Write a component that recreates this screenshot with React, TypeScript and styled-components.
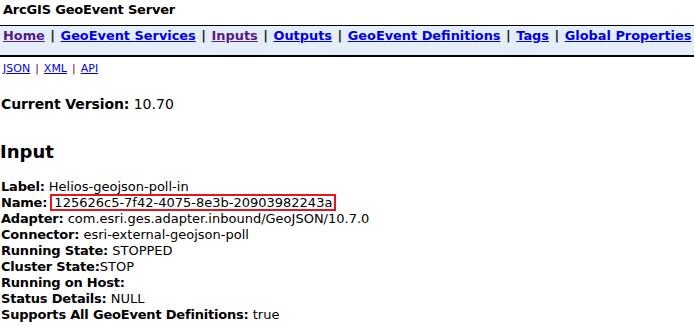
import * as React from 'react'
import styled, { createGlobalStyle } from 'styled-components'

const GlobalStyle = createGlobalStyle`
	body {
		margin: 0;
		background: #ffffff;
		color: #000000;
		font-family: Verdana, 'DejaVu Sans', sans-serif;
	}
`

const Page = styled.div`
	display: flex;
	flex-direction: column;
`

const Title = styled.div`
	height: 25px;
	padding: 2px 0 0 3px;
	box-sizing: border-box;
	font-size: 13px;
	font-weight: bold;
	line-height: 16px;
	letter-spacing: -0.2px;
`

const NavBar = styled.div`
	height: 32px;
	box-sizing: border-box;
	border-top: 1px solid #000;
	border-bottom: 2px solid #000;
	background: #e4eef8;
	padding: 2px 0 0 3px;
	font-size: 12.9px;
	font-weight: bold;
	line-height: 16px;
	white-space: nowrap;
`

const NavLink = styled.a<{ $visited?: boolean }>`
	color: ${(p) => (p.$visited ? '#551a8b' : '#0000ee')};
	text-decoration: underline;
`

const NavSep = styled.span`
	color: #1a1a1a;
	padding: 0 5.5px;
`

const Formats = styled.div`
	padding: 5px 0 0 3px;
	font-size: 11px;
	line-height: 13px;
`

const FormatLink = styled.a`
	color: #0000ee;
	text-decoration: underline;
`

const FormatSep = styled.span`
	color: #800040;
	padding: 0 5px;
`

const Version = styled.div`
	padding: 21px 0 0 1px;
	font-size: 14px;
	line-height: 17px;
`

const Heading = styled.h2`
	margin: 0;
	padding: 29px 0 0 0;
	font-size: 18px;
	line-height: 20px;
	font-weight: bold;
`

const Details = styled.div`
	padding: 17px 0 0 1px;
	display: flex;
	flex-direction: column;
	font-size: 13px;
	line-height: 16px;
`

const Row = styled.div`
	white-space: nowrap;
`

const Key = styled.b<{ $loose?: boolean }>`
	letter-spacing: ${(p) => (p.$loose ? '-0.1px' : '-0.2px')};
`

const Boxed = styled.span`
	outline: 2px solid #e8141c;
	outline-offset: -1px;
	padding: 0 3px;
`

const navItems = [
	{ label: 'Home', visited: true },
	{ label: 'GeoEvent Services' },
	{ label: 'Inputs', visited: true },
	{ label: 'Outputs' },
	{ label: 'GeoEvent Definitions' },
	{ label: 'Tags' },
	{ label: 'Global Properties' }
]

const rows: { key: string; value: string; boxed?: boolean; tight?: boolean }[] = [
	{ key: 'Label:', value: 'Helios-geojson-poll-in' },
	{ key: 'Name:', value: '125626c5-7f42-4075-8e3b-20903982243a', boxed: true },
	{ key: 'Adapter:', value: 'com.esri.ges.adapter.inbound/GeoJSON/10.7.0' },
	{ key: 'Connector:', value: 'esri-external-geojson-poll' },
	{ key: 'Running State:', value: 'STOPPED' },
	{ key: 'Cluster State:', value: 'STOP', tight: true },
	{ key: 'Running on Host:', value: '' },
	{ key: 'Status Details:', value: 'NULL' },
	{ key: 'Supports All GeoEvent Definitions:', value: 'true' }
]

export default function App() {
	return (
		<Page>
			<GlobalStyle />
			<Title>ArcGIS GeoEvent Server</Title>
			<NavBar>
				{navItems.map((item, i) => (
					<React.Fragment key={item.label}>
						{i > 0 && <NavSep>|</NavSep>}
						<NavLink href="#" $visited={item.visited}>
							{item.label}
						</NavLink>
					</React.Fragment>
				))}
			</NavBar>
			<Formats>
				<FormatLink href="#">JSON</FormatLink>
				<FormatSep>|</FormatSep>
				<FormatLink href="#">XML</FormatLink>
				<FormatSep>|</FormatSep>
				<FormatLink href="#">API</FormatLink>
			</Formats>
			<Version>
				<Key $loose>Current Version:</Key> 10.70
			</Version>
			<Heading>Input</Heading>
			<Details>
				{rows.map((r) => (
					<Row key={r.key}>
						<Key>{r.key}</Key>
						{r.tight ? '' : ' '}
						{r.boxed ? <Boxed>{r.value}</Boxed> : r.value}
					</Row>
				))}
			</Details>
		</Page>
	)
}
